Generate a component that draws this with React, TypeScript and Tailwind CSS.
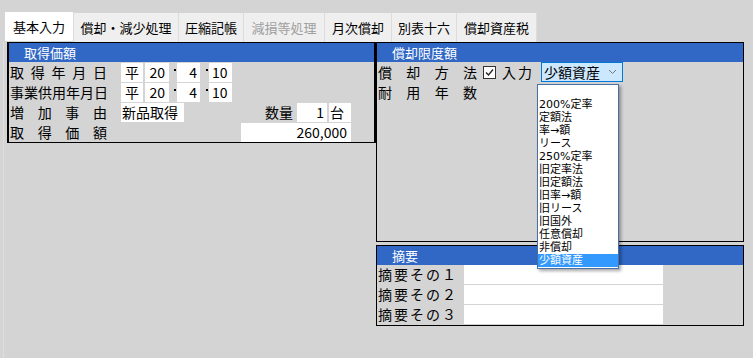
const font = "font-['Noto_Sans_CJK_JP','Noto_Sans',sans-serif]";

const tabs = [
  { label: '基本入力', w: 'w-[69px]', active: true },
  { label: '償却・減少処理', w: 'w-[105px]' },
  { label: '圧縮記帳', w: 'w-[65px]' },
  { label: '減損等処理', w: 'w-[81px]', disabled: true },
  { label: '月次償却', w: 'w-[67px]' },
  { label: '別表十六', w: 'w-[65px]' },
  { label: '償却資産税', w: 'w-[80px]' },
];

const methods = [
  '',
  '200%定率',
  '定額法',
  '率→額',
  'リース',
  '250%定率',
  '旧定率法',
  '旧定額法',
  '旧率→額',
  '旧リース',
  '旧国外',
  '任意償却',
  '非償却',
  '少額資産',
];

// evenly spread label (均等割付)
const Spaced = ({ text, className }: { text: string; className?: string }) => (
  <div className={`flex justify-between ${className ?? ''}`}>
    {text.split('').map((c, i) => (
      <span key={i}>{c}</span>
    ))}
  </div>
);

const Box = ({ children, className }: { children?: React.ReactNode; className?: string }) => (
  <div className={`h-[19px] bg-white leading-[19px] ${className ?? ''}`}>{children}</div>
);

const Dot = ({ className }: { className?: string }) => (
  <div className={`w-[8px] h-[19px] flex ${className ?? ''}`}>
    <div className="w-[2px] h-[2px] bg-black mt-[6px]" />
  </div>
);

const Header = ({ title }: { title: string }) => (
  <div className="h-[19px] bg-[#3167c5] text-white text-[13px] leading-[19px] pl-[15px]">{title}</div>
);

const DateRow = ({ label }: { label: string }) => (
  <div className="h-[20px] flex items-start pt-[1px]">
    <Spaced text={label} className="w-[97px] ml-[1px] leading-[19px]" />
    <Box className="ml-[14px] w-[22px] text-center">平</Box>
    <Box className="ml-[2px] w-[24px] text-right pr-[4px]">20</Box>
    <Dot className="pl-[5px]" />
    <Box className="w-[23px] text-right pr-[3px]">4</Box>
    <Dot className="pl-[6px] w-[9px]" />
    <Box className="w-[23px] text-left pl-[3px]">10</Box>
  </div>
);

export default function App() {
  return (
    <div className={`w-[753px] h-[358px] bg-[#d4d4d4] overflow-hidden text-[14px] text-black ${font}`}>
      {/* tabs */}
      <div className="flex pt-[12px] pl-[5px] h-[41px]">
        {tabs.map((t) => (
          <div
            key={t.label}
            className={`${t.w} h-[29px] flex items-center justify-center text-[13px] border-r border-[#dcdcdc] ${
              t.active ? 'bg-white' : 'bg-[#efefef] mt-[1px] h-[28px]'
            } ${t.disabled ? 'text-[#a0a0a0]' : ''}`}
          >
            {t.label}
          </div>
        ))}
      </div>

      {/* content */}
      <div className="flex mt-[1px] ml-[3px] pl-[3px] h-[316px] border-l border-[#dedede]">
        {/* 取得価額 */}
        <div className="w-[369px] h-[101px] border-x-2 border-y border-black flex flex-col">
          <Header title="取得価額" />
          <DateRow label="取得年月日" />
          <DateRow label="事業供用年月日" />
          <div className="h-[20px] flex items-start pt-[1px]">
            <Spaced text="増加事由" className="w-[97px] ml-[1px] leading-[19px]" />
            <Box className="ml-[14px] w-[63px] pl-[1px]">新品取得</Box>
            <div className="ml-[81px] w-[31px] leading-[19px]">数量</div>
            <Box className="ml-[1px] w-[30px] text-right pr-[3px]">1</Box>
            <Box className="ml-[2px] w-[22px] pl-[1px]">台</Box>
          </div>
          <div className="h-[20px] flex items-start pt-[1px]">
            <Spaced text="取得価額" className="w-[97px] ml-[1px] leading-[19px]" />
            <Box className="ml-[134px] w-[110px] text-right pr-[4px]">260,000</Box>
          </div>
        </div>

        <div className="flex flex-col">
          {/* 償却限度額 */}
          <div className="relative w-[368px] h-[200px] border border-black flex flex-col">
            <Header title="償却限度額" />
            <div className="h-[20px] flex items-center">
              <Spaced text="償却方法" className="w-[99px] ml-[1px] leading-[19px]" />
              <div className="ml-[6px] w-[13px] h-[13px] bg-white border border-[#333] flex items-center justify-center">
                <svg width="11" height="11" viewBox="0 0 11 11">
                  <path d="M2 5.5 L4.5 8 L9 2.5" fill="none" stroke="#222" strokeWidth="1.3" />
                </svg>
              </div>
              <div className="ml-[6px] whitespace-nowrap tracking-[2px]">入力</div>
              <div className="ml-[7px] w-[82px] h-[20px] bg-[#cce8ff] border border-[#0078d7] flex items-center pl-[2px]">
                <span className="leading-[18px]">少額資産</span>
                <svg className="ml-[8px]" width="9" height="6" viewBox="0 0 9 6">
                  <path d="M1 1 L4.5 4.5 L8 1" fill="none" stroke="#777" strokeWidth="1" />
                </svg>
              </div>
            </div>
            <div className="h-[20px] flex items-center">
              <Spaced text="耐用年数" className="w-[99px] ml-[1px] leading-[19px]" />
            </div>

            {/* open dropdown list */}
            <div className="absolute left-[160px] top-[41px] w-[82px] h-[185px] bg-white border border-[#4a6fa5] shadow-[2px_2px_3px_rgba(0,0,0,0.35)] z-10 text-[11px] font-['DejaVu_Sans','Noto_Sans_CJK_JP',sans-serif]">
              {methods.map((m, i) => (
                <div
                  key={i}
                  className={`h-[13px] leading-[13px] pl-[1px] whitespace-nowrap ${
                    m === '少額資産' ? 'bg-[#3399ff] text-white' : ''
                  }`}
                >
                  {m}
                </div>
              ))}
            </div>
          </div>

          {/* 摘要 */}
          <div className="mt-[3px] w-[368px] h-[81px] border border-black flex flex-col">
            <Header title="摘要" />
            {['１', '２', '３'].map((n) => (
              <div key={n} className="h-[20px] flex items-start">
                <div className="w-[87px] pl-[1px] leading-[19px] tracking-[2px]">摘要その{n}</div>
                <div className="w-[199px] h-[19px] bg-white" />
              </div>
            ))}
          </div>
        </div>
      </div>
    </div>
  );
}
